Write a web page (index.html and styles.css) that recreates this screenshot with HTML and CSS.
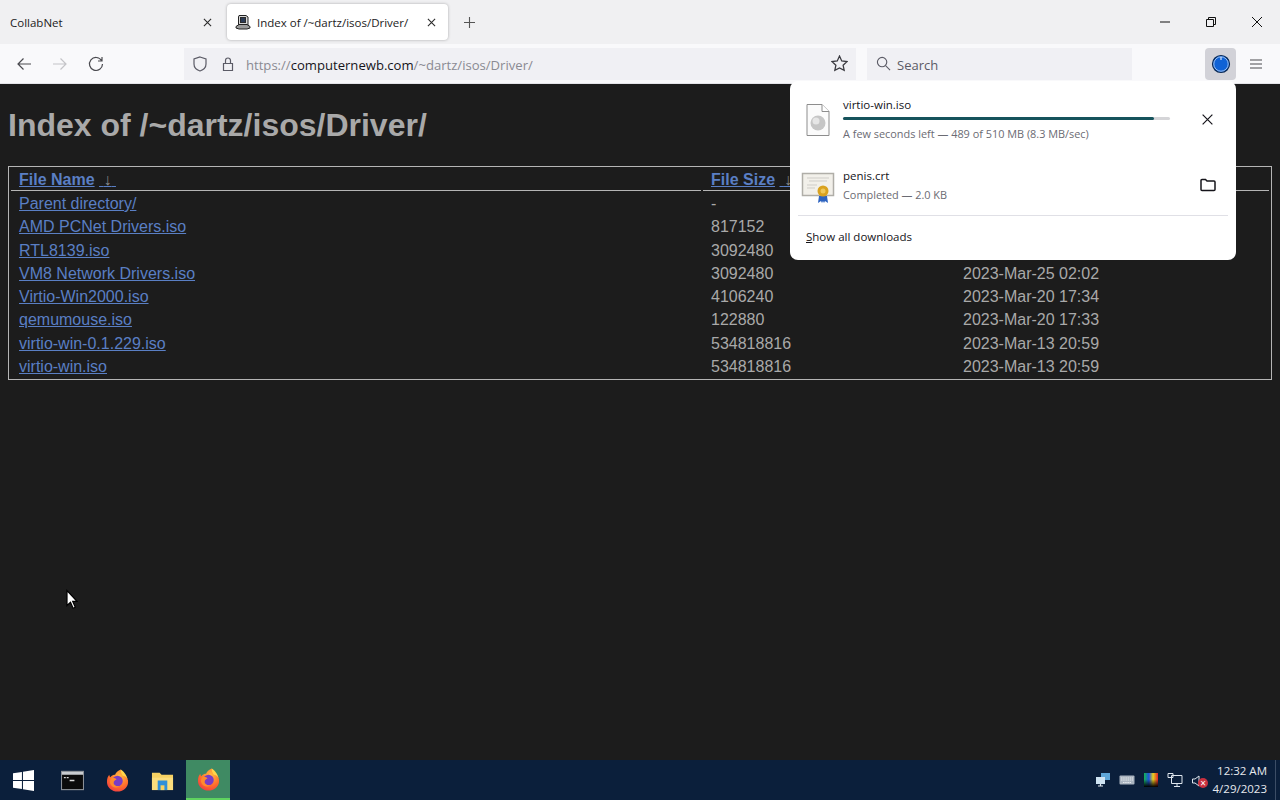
FILE: index.html
```html
<!DOCTYPE html>
<html>
  <head>
    <title>Index of /~dartz/isos/Driver/</title>
    <link rel="stylesheet" href="styles.css">
  </head>
  <body>
    <div class="browser">
      <div class="tabbar">
        <div class="tab">
          <span class="tab-title">CollabNet</span>
          <svg class="tab-close" viewBox="0 0 10 10"><path d="M1 1l8 8M9 1l-8 8"/></svg>
        </div>
        <div class="tab active">
          <svg class="favicon" viewBox="0 0 16 16">
            <path d="M4 1.500h7l2 1.500v8H3.500V3z" fill="#d8d8d8" stroke="#222"/>
            <rect x="5.500" y="3.500" width="5" height="5" fill="#2b3a55"/>
            <path d="M1 12.500l3-2h8l3 2v1.500l-3 1H4l-3-1z" fill="#9a9a9a" stroke="#222"/>
          </svg>
          <span class="tab-title">Index of /~dartz/isos/Driver/</span>
          <svg class="tab-close" viewBox="0 0 10 10"><path d="M1 1l8 8M9 1l-8 8"/></svg>
        </div>
        <svg class="new-tab" viewBox="0 0 12 12"><path d="M6 0v12M0 6h12"/></svg>
        <div class="window-controls">
          <svg viewBox="0 0 12 12"><path d="M1 6h10"/></svg>
          <svg viewBox="0 0 12 12"><path d="M1.500 3.500h7v7h-7zM3.500 3.500v-2h7v7h-2"/></svg>
          <svg viewBox="0 0 12 12"><path d="M1 1l10 10M11 1L1 11"/></svg>
        </div>
      </div>

      <div class="toolbar">
        <svg class="tool-icon" viewBox="0 0 16 16"><path d="M15 8H2M7.500 2.500L2 8l5.500 5.500"/></svg>
        <svg class="tool-icon faded" viewBox="0 0 16 16"><path d="M1 8h13M8.500 2.500L14 8l-5.500 5.500"/></svg>
        <svg class="tool-icon" viewBox="0 0 16 16"><path d="M13.500 4.500A6.500 6.500 0 1 0 14.500 8M14 1v4h-4"/></svg>
        <div class="urlbar">
          <svg class="url-icon" viewBox="0 0 16 16"><path d="M8 1l6 2v5c0 3.500-3 6-6 7-3-1-6-3.500-6-7V3z"/></svg>
          <svg class="url-icon" viewBox="0 0 16 16"><path d="M3.500 7.500h9v7h-9zM5.500 7.500V4.500a2.500 2.500 0 0 1 5 0v3"/></svg>
          <span class="url"><span class="url-dim">https://</span>computernewb.com<span class="url-dim">/~dartz/isos/Driver/</span></span>
          <svg class="url-star" viewBox="0 0 16 16"><path d="M8 1l2.100 4.600 5 .6-3.700 3.400 1 4.900L8 12.100l-4.400 2.400 1-4.900L.9 6.200l5-.6z"/></svg>
        </div>
        <div class="searchbar">
          <svg class="search-icon" viewBox="0 0 16 16"><circle cx="6.500" cy="6.500" r="5"/><path d="M10.200 10.200L15 15"/></svg>
          <span class="search-label">Search</span>
        </div>
        <div class="download-button">
          <svg viewBox="0 0 20 20"><circle cx="10" cy="10" r="8.500" fill="#0f62d6" stroke="#0b2a55"/><circle cx="10" cy="10" r="7.200" fill="none" stroke="#bcd4f5" stroke-width=".8"/><path d="M10 3v3" stroke="#fff" stroke-width="1"/></svg>
        </div>
        <svg class="menu-icon" viewBox="0 0 12 10"><path d="M0 1h12M0 5h12M0 9h12"/></svg>
      </div>

      <div class="page">
        <h1>Index of /~dartz/isos/Driver/</h1>
        <table class="listing">
          <thead>
            <tr>
              <th class="col-name"><a href="#">File Name</a>&nbsp;<a href="#" class="sort">&nbsp;<span>&darr;</span>&nbsp;</a></th>
              <th class="col-size"><a href="#">File Size</a>&nbsp;<a href="#" class="sort">&nbsp;<span>&darr;</span>&nbsp;</a></th>
              <th class="col-date"><a href="#">Date</a>&nbsp;<a href="#" class="sort">&nbsp;<span>&darr;</span>&nbsp;</a></th>
            </tr>
          </thead>
          <tbody>
            <tr><td><a href="#">Parent directory/</a></td><td>-</td><td>-</td></tr>
            <tr><td><a href="#">AMD PCNet Drivers.iso</a></td><td>817152</td><td>2023-Mar-25 02:02</td></tr>
            <tr><td><a href="#">RTL8139.iso</a></td><td>3092480</td><td>2023-Mar-25 02:02</td></tr>
            <tr><td><a href="#">VM8 Network Drivers.iso</a></td><td>3092480</td><td>2023-Mar-25 02:02</td></tr>
            <tr><td><a href="#">Virtio-Win2000.iso</a></td><td>4106240</td><td>2023-Mar-20 17:34</td></tr>
            <tr><td><a href="#">qemumouse.iso</a></td><td>122880</td><td>2023-Mar-20 17:33</td></tr>
            <tr><td><a href="#">virtio-win-0.1.229.iso</a></td><td>534818816</td><td>2023-Mar-13 20:59</td></tr>
            <tr><td><a href="#">virtio-win.iso</a></td><td>534818816</td><td>2023-Mar-13 20:59</td></tr>
          </tbody>
        </table>
      </div>

      <div class="taskbar">
        <svg class="start" viewBox="0 0 20 20"><path d="M0 3l8.500-1.200V9.500H0zM9.500 1.600L20 0v9.500H9.500zM0 10.500h8.500v7.700L0 17zM9.500 10.500H20V20L9.500 18.400z"/></svg>
        <div class="task">
          <svg viewBox="0 0 24 24"><rect x=".5" y="2.500" width="23" height="19" fill="#0b0b0b" stroke="#8a8f96"/><rect x="1" y="3" width="22" height="3" fill="#c9ccd0"/><path d="M3 9h2M6 9h2M9 12h5" stroke="#d8d8d8" stroke-width="1.500"/></svg>
        </div>
        <div class="task">
          <svg viewBox="0 0 24 24"><use href="#firefox"/></svg>
        </div>
        <div class="task">
          <svg viewBox="0 0 24 24"><path d="M1 4h8l2 2h12v16H1z" fill="#f6d163"/><rect x="1" y="9" width="22" height="13" fill="#fbdd7c"/><rect x="7" y="12" width="10" height="10" fill="#2f8fd8"/><rect x="10" y="17" width="4" height="5" fill="#f6d163"/></svg>
        </div>
        <div class="task running">
          <svg viewBox="0 0 24 24"><use href="#firefox"/></svg>
        </div>
        <div class="tray">
          <svg viewBox="0 0 16 16"><rect x="6" y="1" width="9" height="7" fill="#5ea6d8"/><rect x="1" y="5" width="9" height="7" fill="#cfe3f2"/><path d="M3 14h5M5.500 12v2" stroke="#dfe6ee"/></svg>
          <svg viewBox="0 0 16 16"><rect x=".5" y="3.500" width="15" height="9" rx="1" fill="#aab4c0"/><path d="M2 6h12M2 8h12M4 10.500h8" stroke="#e4e8ec" stroke-dasharray="1.500 .7"/></svg>
          <svg viewBox="0 0 16 16">
            <defs>
              <linearGradient id="spectrum"><stop offset="0" stop-color="#12b84f"/><stop offset=".35" stop-color="#1d4fe0"/><stop offset=".65" stop-color="#e8d21b"/><stop offset="1" stop-color="#e0222b"/></linearGradient>
              <linearGradient id="spectrum-fade" x2="0" y2="1"><stop offset=".45" stop-color="#000" stop-opacity="0"/><stop offset="1" stop-color="#000"/></linearGradient>
            </defs>
            <rect x="1" y="1" width="14" height="14" fill="url(#spectrum)"/>
            <rect x="1" y="1" width="14" height="14" fill="url(#spectrum-fade)"/>
          </svg>
          <svg viewBox="0 0 16 16" class="tray-line"><path d="M4.500 3.500H15v8H4.500zM10 11.500V14M7 14.500h6M1 1.500h5v4H1z"/></svg>
          <div class="tray-sound">
            <svg viewBox="0 0 16 16" class="tray-line"><path d="M1.500 6v4h2.500l4 3V3L4 6z"/></svg>
            <span class="mute-badge">&times;</span>
          </div>
        </div>
        <div class="clock">
          <span>12:32 AM</span>
          <span>4/29/2023</span>
        </div>
        <div class="show-desktop"></div>
      </div>
    </div>

    <div class="downloads">
      <div class="dl-item">
        <svg class="dl-icon" viewBox="0 0 34 34">
          <path d="M6 1.500h15l7 7v24H6z" fill="#fbfbfb" stroke="#8d8d8d"/>
          <path d="M21 1.500v7h7" fill="#fff" stroke="#8d8d8d"/>
          <circle cx="17" cy="20" r="7.500" fill="#c6c6c6" stroke="none"/>
          <circle cx="15" cy="18" r="3.500" fill="#e6e6e6" stroke="none"/>
        </svg>
        <div class="dl-text">
          <div class="dl-name">virtio-win.iso</div>
          <div class="dl-progress"><div class="dl-progress-fill" style="width: 95%"></div></div>
          <div class="dl-status">A few seconds left — 489 of 510 MB (8.3 MB/sec)</div>
        </div>
        <svg class="dl-action" viewBox="0 0 16 16"><path d="M2 2l12 12M14 2L2 14"/></svg>
      </div>
      <div class="dl-item second">
        <svg class="dl-icon" viewBox="0 0 34 34">
          <rect x="1.500" y="3.500" width="31" height="22" fill="#f2f0ea" stroke="#b0aea8" stroke-width="1.500"/>
          <path d="M6 8h22M8 11h18M6 15h10M6 18h8" stroke="#cfcdc8"/>
          <path d="M18 26l-1 7 3-2 1 2 1-2 1 2 1-2 3 2-1-7z" fill="#2d63c0"/>
          <circle cx="22" cy="21" r="5.500" fill="#d9a21f"/>
          <circle cx="22" cy="21" r="2.500" fill="#efc859"/>
        </svg>
        <div class="dl-text">
          <div class="dl-name">penis.crt</div>
          <div class="dl-status done">Completed — 2.0 KB</div>
        </div>
        <svg class="dl-action folder" viewBox="0 0 16 16"><path d="M1 3.500a1 1 0 0 1 1-1h3.500L7 4h7a1 1 0 0 1 1 1v7.500a1 1 0 0 1-1 1H2a1 1 0 0 1-1-1z"/></svg>
      </div>
      <div class="dl-footer"><span><u>S</u>how all downloads</span></div>
    </div>

    <svg class="cursor" viewBox="0 0 12 20"><path d="M1 1v15l3.500-3.300 2.600 6 2.200-1-2.600-5.800H11z" fill="#fff" stroke="#000"/></svg>

    <svg class="defs" viewBox="0 0 24 24">
      <defs>
        <radialGradient id="fx-body" cx=".6" cy=".3" r=".9"><stop offset="0" stop-color="#ffbd3f"/><stop offset=".55" stop-color="#ff6b2c"/><stop offset="1" stop-color="#e8234f"/></radialGradient>
        <symbol id="firefox" viewBox="0 0 24 24">
          <path d="M15.500 .5c.5 2.500 2 3.500 4 5.500 2.500 2.500 4 5 3.500 8.500-.8 5.500-5.500 9-11 9S1 19.500 1 13.500C1 10 2 7.500 3.500 6c0 1.300.5 2 1 2.500C6 6.500 8 6 9.500 6c.5-2.500 3-4 6-5.500z" fill="url(#fx-body)"/>
          <circle cx="12" cy="12.500" r="5.500" fill="#7a3cc4"/>
          <path d="M15.500 .5c2.500 1.500 6 5.500 7 10-1-2-3-3.500-5-3.500-1.500-2.500-2.500-4-2-6.500z" fill="#ffd54a"/>
          <path d="M6 9.500c2-.8 4 .2 5 1.500-1.500.5-3 1.500-3 3.500s3 4 6 3.500c-3 2.500-8 1.500-9.500-2.500C3.700 13 4.500 11 6 9.500z" fill="#ff8a2c"/>
        </symbol>
      </defs>
    </svg>
  </body>
</html>
```

FILE: styles.css
```css
html, body {
  margin: 0;
  height: 100%;
  overflow: hidden;
}
body {
  position: relative;
  background: #1c1c1c;
  font-family: "Open Sans", sans-serif;
}
.browser {
  display: flex;
  flex-direction: column;
  height: 800px;
}
svg {
  fill: none;
  stroke: #2b2b2b;
  stroke-width: 1.2;
  flex: none;
}
.defs {
  position: absolute;
  width: 0;
  height: 0;
}

/* tabs */
.tabbar {
  display: flex;
  align-items: center;
  height: 44px;
  background: #f0f0f2;
  flex: none;
}
.tab {
  display: flex;
  align-items: center;
  box-sizing: border-box;
  width: 224px;
  height: 36px;
  padding: 0 12px 0 10px;
  font-size: 11.500px;
  color: #1c1b22;
}
.tab.active {
  width: 221px;
  margin-left: 3px;
  padding-left: 8px;
  background: #fff;
  border-radius: 4px;
  box-shadow: 0 0 3px rgba(0, 0, 0, 0.3);
}
.tab-title {
  flex: 1;
  white-space: nowrap;
}
.favicon {
  width: 16px;
  height: 16px;
  margin-right: 6px;
  stroke-width: 1;
}
.tab-close {
  width: 9px;
  height: 9px;
}
.new-tab {
  width: 11px;
  height: 11px;
  margin-left: 16px;
  stroke: #555;
}
.window-controls {
  display: flex;
  gap: 34px;
  margin-left: auto;
  margin-right: 17px;
}
.window-controls svg {
  width: 12px;
  height: 12px;
  stroke: #111;
  stroke-width: 1;
}

/* nav bar */
.toolbar {
  display: flex;
  align-items: center;
  box-sizing: border-box;
  height: 40px;
  flex: none;
  padding-left: 16px;
  background: #f9f9fb;
  border-bottom: 1px solid #e4e4e8;
}
.tool-icon {
  width: 16px;
  height: 16px;
  margin-right: 20px;
  stroke: #4a4a4f;
}
.tool-icon.faded {
  stroke: #c4c4c8;
}
.urlbar {
  display: flex;
  align-items: center;
  box-sizing: border-box;
  width: 672px;
  height: 32px;
  flex: none;
  margin-left: 60px;
  padding: 0 8px;
  background: #f0f0f4;
}
.url-icon {
  width: 16px;
  height: 16px;
  margin-right: 12px;
  stroke: #5b5b66;
}
.url {
  flex: 1;
  padding-top: 2px;
  font-size: 13.100px;
  color: #15141a;
  white-space: nowrap;
  margin-left: -2px;
}
.url-dim {
  color: #8a8a92;
}
.url-star {
  width: 17px;
  height: 17px;
  stroke: #3a3a40;
}
.searchbar {
  display: flex;
  align-items: center;
  box-sizing: border-box;
  width: 265px;
  height: 32px;
  flex: none;
  margin-left: 11px;
  padding-left: 9px;
  gap: 6px;
  background: #f0f0f4;
  font-size: 13px;
  color: #5b5b66;
}
.search-label {
  padding-top: 2px;
}
.search-icon {
  width: 15px;
  height: 15px;
  stroke: #5b5b66;
}
.download-button {
  display: flex;
  align-items: center;
  justify-content: center;
  width: 31px;
  height: 32px;
  flex: none;
  margin-left: 73px;
  background: #d2d2d8;
  border-radius: 4px;
}
.download-button svg {
  width: 20px;
  height: 20px;
}
.menu-icon {
  width: 12px;
  height: 10px;
  margin-left: 14px;
  stroke: #4a4a4f;
  stroke-width: 1.100;
}

/* directory listing */
.page {
  flex: 1;
  padding: 23px 8px 0;
  background: #1c1c1c;
  color: #a9a9a9;
  font-family: "Liberation Sans", sans-serif;
}
h1 {
  margin: 0 0 22px;
  font-size: 32px;
  line-height: 37px;
  font-weight: bold;
}
.listing {
  width: 100%;
  border: 1px solid #b5b5b5;
  border-collapse: separate;
  border-spacing: 2px;
  font-size: 16px;
  table-layout: fixed;
}
.listing a {
  color: #5a7fc4;
}
.listing th {
  padding: 2px 0 1px 8px;
  line-height: 18px;
  text-align: left;
  border-bottom: 1px solid #b5b5b5;
}
.listing td {
  padding: 1px 0 1px 8px;
  line-height: 19.250px;
}
.col-name {
  width: 682px;
}
.col-size {
  width: 242px;
}
.listing .sort {
  font-weight: normal;
}
.sort span {
  color: #8a8a8a;
}

/* taskbar */
.taskbar {
  display: flex;
  align-items: center;
  height: 40px;
  flex: none;
  background: #0b1f3b;
  color: #e6e9ee;
}
.start {
  width: 21px;
  height: 21px;
  margin: 0 16px 0 13px;
  fill: #fff;
  stroke: none;
}
.task {
  display: flex;
  align-items: center;
  justify-content: center;
  width: 44px;
  height: 40px;
  margin-right: 1px;
}
.task svg {
  width: 23px;
  height: 23px;
  stroke: none;
}
.task.running {
  box-sizing: border-box;
  margin-left: 1px;
  background: #3f8a63;
  border-bottom: 2px solid #5fd35f;
}
.tray {
  display: flex;
  align-items: center;
  gap: 8px;
  margin-left: auto;
}
.tray svg {
  width: 16px;
  height: 16px;
  stroke: none;
}
.tray .tray-line {
  stroke: #dfe6ee;
  stroke-width: 1;
}
.tray-sound {
  position: relative;
  width: 16px;
  height: 16px;
}
.mute-badge {
  position: absolute;
  right: -1px;
  bottom: 0;
  width: 10px;
  height: 10px;
  border-radius: 50%;
  background: #c9303f;
  color: #fff;
  font-size: 10px;
  line-height: 10px;
  text-align: center;
}
.clock {
  display: flex;
  flex-direction: column;
  align-items: flex-end;
  width: 51px;
  margin-left: 9px;
  font-size: 11.500px;
  line-height: 18px;
  white-space: nowrap;
}
.show-desktop {
  width: 1px;
  height: 40px;
  margin-left: 8px;
  margin-right: 4px;
  background: #3c4d66;
}

/* downloads panel */
.downloads {
  position: absolute;
  left: 790px;
  top: 81px;
  display: flex;
  flex-direction: column;
  box-sizing: border-box;
  width: 446px;
  height: 179px;
  background: #fff;
  border-radius: 8px;
  color: #15141a;
  font-size: 11.500px;
}
.dl-item {
  display: flex;
  align-items: flex-start;
  box-sizing: border-box;
  height: 75px;
  padding-top: 16px;
}
.dl-item.second {
  height: 58px;
  padding-top: 12px;
}
.dl-icon {
  width: 34px;
  height: 34px;
  margin: 6px 8px 0 11px;
  stroke-width: 1;
}
.second .dl-icon {
  margin-top: 2px;
  stroke: none;
}
.dl-text {
  width: 327px;
}
.dl-name {
  line-height: 16px;
}
.dl-progress {
  height: 3px;
  margin-top: 4px;
  background: #d5d5d8;
  border-radius: 2px;
}
.dl-progress-fill {
  height: 3px;
  background: #16535c;
  border-radius: 2px;
}
.dl-status {
  margin-top: 6px;
  color: #6b6b73;
  font-size: 10.900px;
  line-height: 15px;
}
.dl-status.done {
  margin-top: 3px;
}
.dl-action {
  width: 13px;
  height: 13px;
  margin: 16px 0 0 31px;
  stroke: #15141a;
  stroke-width: 1.500;
}
.dl-action.folder {
  width: 16px;
  height: 16px;
  margin: 9px 0 0 30px;
}
.dl-footer {
  margin: 1px 8px 0;
  padding: 13px 8px 0;
  border-top: 1px solid #e0e0e6;
  line-height: 16px;
}
.cursor {
  position: absolute;
  left: 66px;
  top: 589px;
  width: 12px;
  height: 21px;
  stroke: none;
}
```
